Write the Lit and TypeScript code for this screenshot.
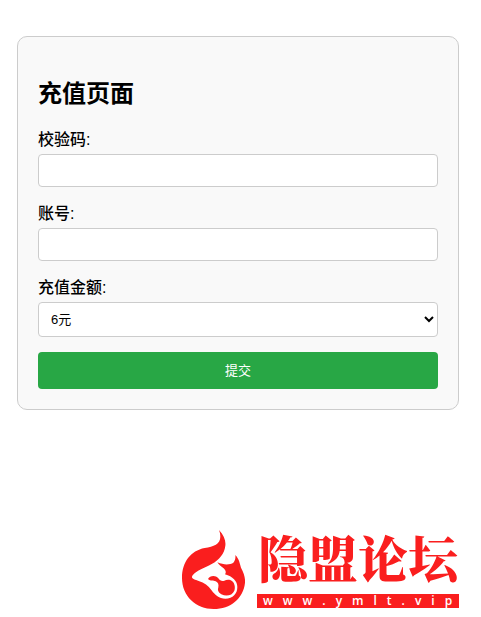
import { LitElement, html, css } from "lit";
import { customElement, state } from "lit/decorators.js";

@customElement("forum-logo")
export class ForumLogo extends LitElement {
  static styles = css`
    :host {
      display: flex;
      align-items: flex-end;
      gap: 12px;
      color: #fa1e1e;
    }
    .mark {
      width: 63px;
      height: 79px;
      flex: none;
    }
    .words {
      width: 202px;
    }
    .name {
      padding: 0 1px;
      font: 900 50px/76px "Noto Serif CJK SC", "Noto Sans CJK SC", serif;
      white-space: nowrap;
    }
    .site {
      display: block;
      padding-left: 6px;
      margin-bottom: 1px;
      background: #fa1e1e;
      color: #fff;
      font: 600 12px/14px "Open Sans", sans-serif;
      letter-spacing: 10px;
      text-decoration: none;
      white-space: nowrap;
    }
  `;

  render() {
    return html`
      <svg class="mark" viewBox="24 30 189 237" aria-hidden="true">
        <path
          fill="currentColor"
          d="M135 30C150 46 156 62 154 77C151 101 136 119 113 132C92 144 68 151 56 166C49 176 61 179 74 183C91 188 103 197 112 210C124 226 135 235 154 236C177 236 190 221 190 201C190 184 176 169 153 163C158 157 154 149 148 144C141 140 135 134 130 127C151 136 169 134 178 128C184 121 185 113 184 105C196 118 197 130 201 143C210 160 214 173 213 188C208 235 170 267 119 267C66 267 24 229 24 174C24 126 50 92 92 84C119 80 139 72 139 50C139 42 137 36 135 30Z"
        />
        <path
          fill="currentColor"
          d="M102 177C107 167 124 164 133 175C138 182 144 185 151 182C158 178 168 178 174 183C183 190 184 204 181 212C175 226 158 231 142 223C132 217 130 210 133 202C135 194 132 187 125 184C118 181 110 184 102 177Z"
        />
      </svg>
      <div class="words">
        <div class="name">隐盟论坛</div>
        <a class="site" href="#">www.ymlt.vip</a>
      </div>
    `;
  }
}

@customElement("app-root")
export class AppRoot extends LitElement {
  static styles = css`
    :host {
      display: block;
      padding: 36px 22px 8px 17px;
      font-family: "Liberation Sans", "Noto Sans CJK SC", sans-serif;
      font-size: 16px;
      color: #000;
    }
    * {
      box-sizing: border-box;
    }
    .card {
      padding: 20px;
      border: 1px solid #ccc;
      border-radius: 10px;
      background: #f9f9f9;
    }
    .title {
      margin: 20px 0 18px;
      font-size: 24px;
      line-height: 34px;
      font-weight: bold;
    }
    .label {
      display: block;
      margin-bottom: 3px;
      line-height: 22px;
      font-weight: 500;
    }
    .field {
      display: block;
      width: 100%;
      height: 33px;
      margin-bottom: 16px;
      padding: 8px;
      border: 1px solid #ccc;
      border-radius: 4px;
      background: #fff;
      color: #000;
      font-family: inherit;
      font-size: 13px;
    }
    .select {
      height: 35px;
      margin-bottom: 15px;
    }
    .submit {
      display: block;
      width: 100%;
      padding: 10px;
      border: 0;
      border-radius: 4px;
      background: #28a745;
      color: #fff;
      font-family: inherit;
      font-size: 13px;
      line-height: 17px;
      cursor: pointer;
    }
    .footer {
      display: flex;
      justify-content: flex-end;
      margin-top: 108px;
    }
  `;

  @state() private amount = "6";

  private readonly amounts = ["6", "30", "68", "128", "328", "648"];

  render() {
    return html`
      <form class="card" @submit=${(e: Event) => e.preventDefault()}>
        <h2 class="title">充值页面</h2>
        <label class="label" for="code">校验码:</label>
        <input class="field" id="code" type="text" />
        <label class="label" for="account">账号:</label>
        <input class="field" id="account" type="text" />
        <label class="label" for="amount">充值金额:</label>
        <select
          class="field select"
          id="amount"
          @change=${(e: Event) => (this.amount = (e.target as HTMLSelectElement).value)}
        >
          ${this.amounts.map(
            (a) => html`<option value=${a} ?selected=${a === this.amount}>${a}元</option>`
          )}
        </select>
        <button class="submit" type="submit">提交</button>
      </form>
      <footer class="footer"><forum-logo></forum-logo></footer>
    `;
  }
}
